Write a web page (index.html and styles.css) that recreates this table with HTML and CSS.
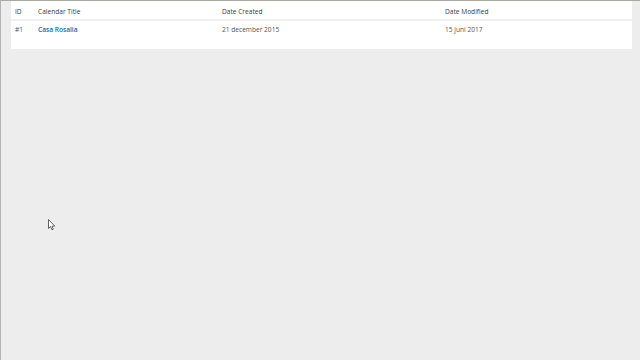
FILE: index.html
```html
<!DOCTYPE html>
<html>
<head>
<meta charset="utf-8">
<link rel="stylesheet" href="styles.css">
</head>
<body>
<div class="frame">
  <div class="table">
    <div class="row head">
      <div class="c id">ID</div>
      <div class="c">Calendar Title</div>
      <div class="c">Date Created</div>
      <div class="c">Date Modified</div>
    </div>
    <div class="row body">
      <div class="c id">#1</div>
      <div class="c"><a class="title" href="#">Casa Rosalia</a></div>
      <div class="c">21 december 2015</div>
      <div class="c">15 juni 2017</div>
    </div>
  </div>
</div>
<svg class="cursor" width="8" height="12" viewBox="0 0 8 12">
  <path d="M0.5 0.5 L0.5 9.5 L2.6 7.6 L4 10.8 L5.3 10.2 L4 7.1 L6.8 7.1 Z" fill="#fff" stroke="#555" stroke-width="0.9" stroke-linejoin="round"/>
</svg>
</body>
</html>
```
FILE: styles.css
```css
html, body {
  margin: 0;
  padding: 0;
  height: 100%;
}
body {
  background: #ededed;
  font-family: "Open Sans", "Noto Sans", sans-serif;
  position: relative;
  overflow: hidden;
}
.frame {
  box-sizing: border-box;
  height: 360px;
  border-top: 1px solid #a9a99f;
  border-left: 1px solid #b3b3b3;
  padding: 0 8px 0 10px;
}
.table {
  display: flex;
  flex-direction: column;
  gap: 2px;
  background: #efefef;
}
.row {
  display: grid;
  grid-template-columns: 27px 184px 223px 1fr;
  background: #fff;
  font-size: 6.6px;
  color: #3c3c3c;
}
.head {
  height: 18px;
  align-items: center;
  padding-top: 2px;
  box-sizing: border-box;
}
.body {
  height: 28px;
  align-items: start;
  padding-top: 4px;
  box-sizing: border-box;
  color: #555;
}
.c {
  white-space: nowrap;
  line-height: 9px;
}
.id {
  padding-left: 4px;
}
.title {
  color: #0073aa;
  font-weight: 600;
  text-decoration: none;
}
.cursor {
  position: absolute;
  left: 48px;
  top: 219px;
}
```
